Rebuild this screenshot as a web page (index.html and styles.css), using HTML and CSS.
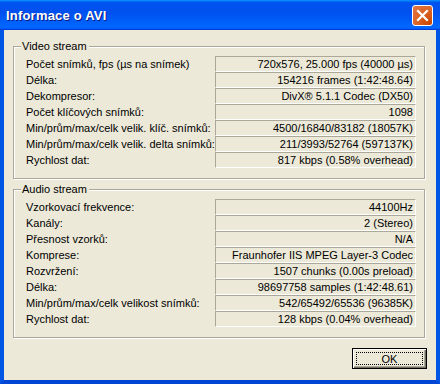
FILE: index.html
```html
<!DOCTYPE html>
<html lang="cs">
<head>
<meta charset="utf-8">
<title>Informace o AVI</title>
<link rel="stylesheet" href="styles.css">
</head>
<body>
<div class="window">
  <div class="titlebar">
    <span class="title">Informace o AVI</span>
    <button class="close" aria-label="Zavřít">
      <svg width="13" height="13" viewBox="0 0 13 13"><path d="M2 2 L11 11 M11 2 L2 11" stroke="#fff" stroke-width="2.2" stroke-linecap="square"/></svg>
    </button>
  </div>
  <div class="frame">
    <div class="group">
      <span class="group-title">Video stream</span>
      <div class="rows">
        <span class="label">Počet snímků, fps (µs na snímek)</span><span class="field">720x576, 25.000 fps (40000 µs)</span>
        <span class="label">Délka:</span><span class="field">154216 frames (1:42:48.64)</span>
        <span class="label">Dekompresor:</span><span class="field">DivX® 5.1.1 Codec (DX50)</span>
        <span class="label">Počet klíčových snímků:</span><span class="field">1098</span>
        <span class="label">Min/prům/max/celk velik. klíč. snímků:</span><span class="field">4500/16840/83182 (18057K)</span>
        <span class="label">Min/prům/max/celk velik. delta snímků:</span><span class="field">211/3993/52764 (597137K)</span>
        <span class="label">Rychlost dat:</span><span class="field">817 kbps (0.58% overhead)</span>
      </div>
    </div>
    <div class="group audio">
      <span class="group-title">Audio stream</span>
      <div class="rows">
        <span class="label">Vzorkovací frekvence:</span><span class="field">44100Hz</span>
        <span class="label">Kanály:</span><span class="field">2 (Stereo)</span>
        <span class="label">Přesnost vzorků:</span><span class="field">N/A</span>
        <span class="label">Komprese:</span><span class="field">Fraunhofer IIS MPEG Layer-3 Codec</span>
        <span class="label">Rozvržení:</span><span class="field">1507 chunks (0.00s preload)</span>
        <span class="label">Délka:</span><span class="field">98697758 samples (1:42:48.61)</span>
        <span class="label">Min/prům/max/celk velikost snímků:</span><span class="field">542/65492/65536 (96385K)</span>
        <span class="label">Rychlost dat:</span><span class="field">128 kbps (0.04% overhead)</span>
      </div>
    </div>
    <div class="buttons">
      <button class="btn">OK</button>
    </div>
  </div>
</div>
</body>
</html>
```

FILE: styles.css
```css
html, body {
  margin: 0;
  padding: 0;
  background: #ECE9D8;
}
.window {
  width: 440px;
  height: 384px;
  display: flex;
  flex-direction: column;
  font-family: "Liberation Sans", Arial, sans-serif;
  font-size: 11px;
  color: #000;
}
.titlebar {
  height: 30px;
  flex: none;
  display: flex;
  align-items: center;
  justify-content: space-between;
  padding: 0 7px 0 6px;
  box-sizing: border-box;
  background: linear-gradient(to bottom, #0997FF 0, #0053EE 8%, #0050EE 40%, #0066FF 88%, #0066FF 93%, #005BFF 95%, #003DD7 96%, #003DD7 100%);
}
.title {
  color: #fff;
  font-family: "Liberation Sans", Arial, sans-serif;
  font-weight: bold;
  font-size: 13px;
  text-shadow: 1px 1px #0A1883;
  letter-spacing: 0.2px;
}
.close {
  width: 21px;
  height: 21px;
  padding: 0;
  border: 1px solid #fff;
  border-radius: 3px;
  background: radial-gradient(circle at 90% 90%, #CC4600 0%, #DC6527 55%, #E3764A 100%);
  display: flex;
  align-items: center;
  justify-content: center;
  box-sizing: border-box;
}
.frame {
  flex: 1;
  display: flex;
  flex-direction: column;
  border-left: 4px solid #0055E5;
  border-right: 4px solid #0055E5;
  border-bottom: 4px solid #0046D5;
  background: #ECE9D8;
}
.group {
  position: relative;
  margin: 16px 11px 0 9px;
  border: 1px solid #ACA899;
  box-shadow: inset 1px 1px #fff, 1px 1px #fff;
  padding: 9px 8px 10px 12px;
}
.group.audio {
  margin-top: 10px;
}
.group-title {
  position: absolute;
  top: -7px;
  left: 7px;
  padding: 0 2px 0 1px;
  background: #ECE9D8;
  line-height: 13px;
}
.rows {
  display: grid;
  grid-template-columns: 189px 201px;
  grid-auto-rows: 16px;
}
.label {
  line-height: 16px;
  white-space: nowrap;
}
.field {
  box-sizing: border-box;
  border-top: 1px solid #ACA899;
  border-left: 1px solid #ACA899;
  border-bottom: 1px solid #fff;
  border-right: 1px solid #fff;
  text-align: right;
  padding-right: 2px;
  line-height: 14px;
  white-space: nowrap;
  overflow: hidden;
}
.buttons {
  display: flex;
  justify-content: flex-end;
  margin: 10px 9px 0 0;
}
.btn {
  width: 75px;
  height: 21px;
  padding: 0;
  font-family: "Liberation Sans", Arial, sans-serif;
  font-size: 11px;
  color: #000;
  background: #ECE9D8;
  border: 1px solid #000;
  box-shadow: inset 1px 1px #fff, inset -1px -1px #716F64, inset -2px -2px #ACA899;
  outline: 1px dotted #000;
  outline-offset: -5px;
  border-radius: 0;
}
```
